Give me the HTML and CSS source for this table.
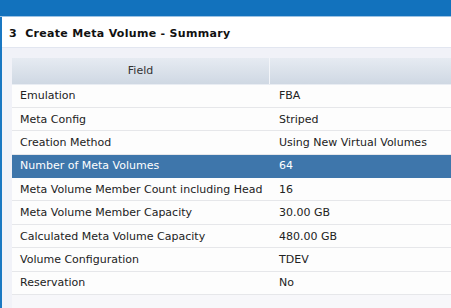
FILE: index.html
```html
<!DOCTYPE html>
<html>
<head>
<meta charset="utf-8">
<link rel="stylesheet" href="styles.css">
</head>
<body>
<div class="topbar"></div>
<div class="main">
  <div class="title">3&nbsp; Create Meta Volume - Summary</div>
  <div class="panel">
    <div class="grid">
      <div class="head">
        <div class="hcell field">Field</div>
        <div class="hcell"></div>
      </div>
      <div class="row"><div class="c1">Emulation</div><div class="c2">FBA</div></div>
      <div class="row"><div class="c1">Meta Config</div><div class="c2">Striped</div></div>
      <div class="row"><div class="c1">Creation Method</div><div class="c2">Using New Virtual Volumes</div></div>
      <div class="row selected"><div class="c1">Number of Meta Volumes</div><div class="c2">64</div></div>
      <div class="row"><div class="c1">Meta Volume Member Count including Head</div><div class="c2">16</div></div>
      <div class="row"><div class="c1">Meta Volume Member Capacity</div><div class="c2">30.00 GB</div></div>
      <div class="row"><div class="c1">Calculated Meta Volume Capacity</div><div class="c2">480.00 GB</div></div>
      <div class="row"><div class="c1">Volume Configuration</div><div class="c2">TDEV</div></div>
      <div class="row"><div class="c1">Reservation</div><div class="c2">No</div></div>
      <div class="filler"></div>
    </div>
  </div>
</div>
</body>
</html>
```
FILE: styles.css
```css
html, body {
  margin: 0;
  padding: 0;
  overflow: hidden;
  background: #ffffff;
  font-family: "DejaVu Sans", Verdana, sans-serif;
  font-size: 11px;
  color: #222;
}
.topbar {
  height: 16px;
  background: #1272bd;
  border-bottom: 1px solid #9cc3e4;
}
.main {
  border-left: 2px solid #1a78c2;
  height: 291px;
  display: flex;
  flex-direction: column;
}
.title {
  height: 31px;
  box-sizing: border-box;
  display: flex;
  align-items: center;
  padding-left: 7px;
  padding-top: 3px;
  font-weight: bold;
  font-size: 11px;
  letter-spacing: 0.3px;
  color: #111;
  background: #fff;
  border-bottom: 1px solid #e2e6f0;
}
.panel {
  flex: 1;
  background: #f1f2f8;
  padding: 10px 0 0 10px;
  min-height: 0;
}
.grid {
  width: 560px;
  display: flex;
  flex-direction: column;
  height: 100%;
}
.head {
  flex: none;
  display: grid;
  grid-template-columns: 258px 1fr;
  height: 26.5px;
  background: linear-gradient(#e6ebf2, #cfd8e3);
  border-bottom: 1px solid #e9edf3;
  box-sizing: border-box;
}
.hcell {
  display: flex;
  align-items: center;
  justify-content: center;
  color: #333;
}
.field {
  border-right: 1px solid #f3f5f9;
}
.row {
  flex: none;
  display: grid;
  grid-template-columns: 258px 1fr;
  height: 23.4px;
  box-sizing: border-box;
  background: #fdfdfd;
  border-bottom: 1px solid #e6e7ea;
  color: #222;
}
.c1, .c2 {
  display: flex;
  align-items: center;
  padding-left: 8px;
  white-space: nowrap;
}
.c2 {
  padding-left: 9px;
}
.row.selected {
  background: #3e76ab;
  color: #fff;
  border-bottom-color: #3e76ab;
}
.filler {
  flex: 1;
  background: #f7f7fa;
}
```
